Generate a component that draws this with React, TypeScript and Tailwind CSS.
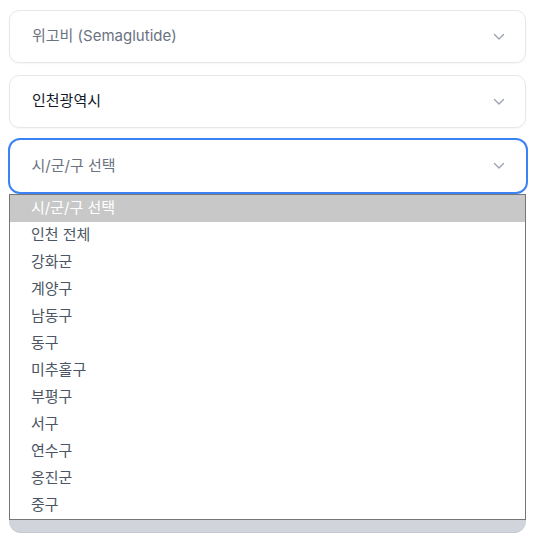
import React from "react";

const Chevron = () => (
  <svg width="12" height="8" viewBox="0 0 12 8" fill="none" className="shrink-0">
    <path d="M1.5 1.5L6 6L10.5 1.5" stroke="#9ca3af" strokeWidth="1.4" strokeLinecap="round" strokeLinejoin="round" />
  </svg>
);

const items = [
  "시/군/구 선택",
  "인천 전체",
  "강화군",
  "계양구",
  "남동구",
  "동구",
  "미추홀구",
  "부평구",
  "서구",
  "연수구",
  "옹진군",
  "중구",
];

export default function App() {
  const font = { fontFamily: 'Inter, "Noto Sans CJK KR", sans-serif' };
  return (
    <div className="w-[534px] h-[537px] bg-white overflow-hidden" style={font}>
      <div className="flex flex-col pt-[10px] pl-[9px] pr-[8px]">
        <div className="h-[53px] rounded-[10px] border border-[#e5e7eb] shadow-[0_1px_2px_rgba(0,0,0,0.04)] flex items-center justify-between pl-[22px] pr-[20px]">
          <span className="text-[15px] text-[#6b7280]">위고비 (Semaglutide)</span>
          <Chevron />
        </div>
        <div className="mt-[12px] h-[53px] rounded-[10px] border border-[#e5e7eb] shadow-[0_1px_2px_rgba(0,0,0,0.04)] flex items-center justify-between pl-[22px] pr-[20px]">
          <span className="text-[15px] text-[#111827]">인천광역시</span>
          <Chevron />
        </div>
        <div className="mt-[10px] -mx-[1.5px] h-[56px] rounded-[12px] border-2 border-[#3b82f6] flex items-center justify-between pl-[22px] pr-[21px]">
          <span className="text-[15px] text-[#6b7280]">시/군/구 선택</span>
          <Chevron />
        </div>
        <div className="relative">
          <div className="relative z-10 border border-[#767676] bg-white flex flex-col">
            {items.map((it, i) => (
              <div
                key={it}
                className={
                  i === 0
                    ? "h-[27px] flex items-center pl-[21px] bg-[#c8c8c8] text-white text-[15px]"
                    : "h-[27px] flex items-center pl-[21px] text-[#4b5563] text-[15px]"
                }
              >
                {it}
              </div>
            ))}
          </div>
          <div className="h-[14px] -mt-[1px] rounded-b-[12px] bg-[#d1d5db] border-b border-[#c4c8cf]" />
        </div>
      </div>
    </div>
  );
}
